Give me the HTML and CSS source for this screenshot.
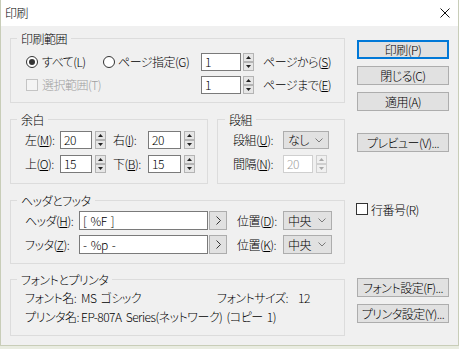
FILE: index.html
```html
<!DOCTYPE html>
<html lang="ja">
<head>
<meta charset="utf-8">
<title>印刷</title>
<link rel="stylesheet" href="styles.css">
</head>
<body>
<div class="window">
  <div class="titlebar">
    <span class="title">印刷</span>
    <svg class="close" width="10" height="10" viewBox="0 0 10 10"><path d="M0.5 0.5L9.5 9.5M9.5 0.5L0.5 9.5" stroke="#111" stroke-width="1"/></svg>
  </div>
  <div class="body">
    <div class="left">
      <div class="group g-range">
        <div class="legend">印刷範囲</div>
        <div class="row r-first">
          <label class="opt w-all"><span class="radio checked"></span>すべて(L)</label>
          <label class="opt w-pages"><span class="radio"></span>ページ指定(G)</label>
          <span class="input w40">1</span>
          <svg class="spin" width="11" height="18" viewBox="0 0 11 18"><rect x="0.5" y="0.5" width="10" height="8" fill="#e6e6e6" stroke="#b4b4b4"/><rect x="0.5" y="9.5" width="10" height="8" fill="#e6e6e6" stroke="#b4b4b4"/><path d="M3 6h5L5.5 3z" fill="#222"/><path d="M3 12h5L5.5 15z" fill="#222"/></svg>
          <span class="after">ページから(<u>S</u>)</span>
        </div>
        <div class="row r-second">
          <label class="opt w-sel disabled"><span class="check off"></span>選択範囲(T)</label>
          <span class="input w40">1</span>
          <svg class="spin" width="11" height="18" viewBox="0 0 11 18"><rect x="0.5" y="0.5" width="10" height="8" fill="#e6e6e6" stroke="#b4b4b4"/><rect x="0.5" y="9.5" width="10" height="8" fill="#e6e6e6" stroke="#b4b4b4"/><path d="M3 6h5L5.5 3z" fill="#222"/><path d="M3 12h5L5.5 15z" fill="#222"/></svg>
          <span class="after">ページまで(<u>E</u>)</span>
        </div>
      </div>

      <div class="pair">
        <div class="group g-margin">
          <div class="legend">余白</div>
          <div class="row m-first">
            <span class="lbl w35">左(<u>M</u>):</span>
            <span class="input w32">20</span>
            <svg class="spin" width="11" height="18" viewBox="0 0 11 18"><rect x="0.5" y="0.5" width="10" height="8" fill="#e6e6e6" stroke="#b4b4b4"/><rect x="0.5" y="9.5" width="10" height="8" fill="#e6e6e6" stroke="#b4b4b4"/><path d="M3 6h5L5.5 3z" fill="#222"/><path d="M3 12h5L5.5 15z" fill="#222"/></svg>
            <span class="lbl w35 gap7">右(<u>I</u>):</span>
            <span class="input w33">20</span>
            <svg class="spin" width="11" height="18" viewBox="0 0 11 18"><rect x="0.5" y="0.5" width="10" height="8" fill="#e6e6e6" stroke="#b4b4b4"/><rect x="0.5" y="9.5" width="10" height="8" fill="#e6e6e6" stroke="#b4b4b4"/><path d="M3 6h5L5.5 3z" fill="#222"/><path d="M3 12h5L5.5 15z" fill="#222"/></svg>
          </div>
          <div class="row m-second">
            <span class="lbl w35">上(<u>O</u>):</span>
            <span class="input w32">15</span>
            <svg class="spin" width="11" height="18" viewBox="0 0 11 18"><rect x="0.5" y="0.5" width="10" height="8" fill="#e6e6e6" stroke="#b4b4b4"/><rect x="0.5" y="9.5" width="10" height="8" fill="#e6e6e6" stroke="#b4b4b4"/><path d="M3 6h5L5.5 3z" fill="#222"/><path d="M3 12h5L5.5 15z" fill="#222"/></svg>
            <span class="lbl w35 gap7">下(<u>B</u>):</span>
            <span class="input w33">15</span>
            <svg class="spin" width="11" height="18" viewBox="0 0 11 18"><rect x="0.5" y="0.5" width="10" height="8" fill="#e6e6e6" stroke="#b4b4b4"/><rect x="0.5" y="9.5" width="10" height="8" fill="#e6e6e6" stroke="#b4b4b4"/><path d="M3 6h5L5.5 3z" fill="#222"/><path d="M3 12h5L5.5 15z" fill="#222"/></svg>
          </div>
        </div>
        <div class="group g-cols">
          <div class="legend">段組</div>
          <div class="row m-first">
            <span class="lbl w50">段組(<u>U</u>):</span>
            <span class="select w46"><span>なし</span><svg width="8" height="5" viewBox="0 0 8 5"><path d="M0.5 0.5L4 4L7.5 0.5" fill="none" stroke="#7a7a7a"/></svg></span>
          </div>
          <div class="row m-second">
            <span class="lbl w50">間隔(<u>N</u>):</span>
            <span class="input w30 dis">20</span>
            <svg class="spin" width="11" height="18" viewBox="0 0 11 18"><rect x="0.5" y="0.5" width="10" height="8" fill="#f0f0f0" stroke="#d0d0d0"/><rect x="0.5" y="9.5" width="10" height="8" fill="#f0f0f0" stroke="#d0d0d0"/><path d="M3 6h5L5.5 3z" fill="#a8a8a8"/><path d="M3 12h5L5.5 15z" fill="#a8a8a8"/></svg>
          </div>
        </div>
      </div>

      <div class="group g-header">
        <div class="legend">ヘッダとフッタ</div>
        <div class="row h-first">
          <span class="lbl w54">ヘッダ(<u>H</u>):</span>
          <span class="input w129">[ %F ]</span>
          <span class="arrowbtn"><svg width="5" height="9" viewBox="0 0 5 9"><path d="M0.5 0.5L4.5 4.5L0.5 8.5" fill="none" stroke="#333"/></svg></span>
          <span class="lbl w46 gap10">位置(<u>D</u>):</span>
          <span class="select w49"><span>中央</span><svg width="8" height="5" viewBox="0 0 8 5"><path d="M0.5 0.5L4 4L7.5 0.5" fill="none" stroke="#7a7a7a"/></svg></span>
        </div>
        <div class="row h-second">
          <span class="lbl w54">フッタ(<u>Z</u>):</span>
          <span class="input w129">- %p -</span>
          <span class="arrowbtn"><svg width="5" height="9" viewBox="0 0 5 9"><path d="M0.5 0.5L4.5 4.5L0.5 8.5" fill="none" stroke="#333"/></svg></span>
          <span class="lbl w46 gap10">位置(<u>K</u>):</span>
          <span class="select w49"><span>中央</span><svg width="8" height="5" viewBox="0 0 8 5"><path d="M0.5 0.5L4 4L7.5 0.5" fill="none" stroke="#7a7a7a"/></svg></span>
        </div>
      </div>

      <div class="group g-font">
        <div class="legend">フォントとプリンタ</div>
        <div class="row f-first">
          <span class="lbl w56">フォント名:</span>
          <span class="val w136">MS ゴシック</span>
          <span class="val w81">フォントサイズ:</span>
          <span class="val">12</span>
        </div>
        <div class="row f-second">
          <span class="lbl w56">プリンタ名:</span>
          <span class="val">EP-807A Series(ネットワーク) (コピー 1)</span>
        </div>
      </div>
    </div>

    <div class="right">
      <button class="btn default b-print">印刷(P)</button>
      <button class="btn b-next">閉じる(C)</button>
      <button class="btn b-next">適用(A)</button>
      <button class="btn b-preview">プレビュー(V)...</button>
      <label class="opt linenum"><span class="check"></span>行番号(R)</label>
      <button class="btn b-font">フォント設定(F)...</button>
      <button class="btn b-next">プリンタ設定(Y)...</button>
    </div>
  </div>
</div>
</body>
</html>
```

FILE: styles.css
```css
* { box-sizing: border-box; }
html, body { margin: 0; padding: 0; }
body {
  width: 459px;
  height: 349px;
  overflow: hidden;
  background: #e9ece1;
  font-family: "Noto Sans CJK JP", "Noto Sans", sans-serif;
  font-size: 12px;
  font-weight: 300;
  letter-spacing: -0.5px;
  word-spacing: 2px;
  color: #000;
  font-feature-settings: "palt";
}
.window {
  width: 459px;
  height: 346px;
  background: #f0f0f0;
  border: 1px solid #c8cdb8;
  border-top: none;
  display: flex;
  flex-direction: column;
}
.titlebar {
  flex: none;
  height: 26px;
  background: #fff;
  display: flex;
  align-items: center;
  justify-content: space-between;
  padding: 0 8px 0 4px;
}
.title { line-height: 14px; }
.close { display: block; }

.body { display: flex; gap: 12px; padding-left: 9px; }
.left { width: 335px; padding-top: 12px; display: flex; flex-direction: column; }
.right { width: 92px; display: flex; flex-direction: column; padding-top: 14px; }

/* group boxes */
.group { border: 1px solid #dcdcdc; display: flex; flex-direction: column; padding-left: 14px; }
.legend {
  align-self: flex-start;
  margin: -7px 0 0 -8px;
  padding: 0 4px;
  height: 14px;
  line-height: 14px;
  background: #f0f0f0;
}
.row { display: flex; align-items: center; height: 18px; line-height: 16px; white-space: nowrap; }

.g-range { height: 65px; }
.r-first { margin-top: 7px; padding-left: 1px; }
.r-second { margin-top: 5px; padding-left: 1px; }

.pair { display: flex; gap: 9px; margin-top: 16px; }
.g-margin { width: 198px; height: 65px; }
.g-cols { width: 128px; height: 65px; padding-left: 15px; }
.m-first { margin-top: 4px; }
.m-second { margin-top: 6px; }

.g-header { height: 64px; margin-top: 16px; }
.h-first { margin-top: 3px; height: 19px; }
.h-second { margin-top: 5px; height: 19px; }

.g-font { height: 57px; margin-top: 15px; }
.f-first { margin-top: 3px; height: 16px; }
.f-second { margin-top: 3px; height: 16px; }

/* controls */
.opt { display: flex; align-items: center; gap: 4px; white-space: nowrap; }
.w-all { width: 77px; }
.w-pages { width: 98px; gap: 3px; }
.w-sel { width: 175px; }
.disabled { color: #a0a0a0; }

.radio {
  width: 12px; height: 12px; border-radius: 50%;
  border: 1px solid #333; background: #fff;
  display: flex; align-items: center; justify-content: center;
  flex: none;
}
.radio.checked::after {
  content: ""; width: 6px; height: 6px; border-radius: 50%; background: #333;
}
.check { width: 12px; height: 12px; border: 1px solid #333; background: #fff; flex: none; }
.check.off { border-color: #c4c4c4; background: #f4f4f4; }

.input {
  height: 18px;
  border: 1px solid #7a7a7a;
  background: #fff;
  padding-left: 3px;
  line-height: 16px;
  flex: none;
}
.input.dis { border-color: #cfcfcf; color: #a0a0a0; }
.h-first .input, .h-second .input { height: 19px; line-height: 17px; }
.w40 { width: 40px; }
.w32 { width: 32px; }
.w33 { width: 33px; }
.w30 { width: 30px; }
.w129 { width: 129px; }

.spin { display: block; flex: none; margin-left: 2px; }
.m-first .spin, .m-second .spin { margin-left: 3px; }
.after { margin-left: 9px; }

.lbl { flex: none; }
.w35 { width: 35px; }
.w50 { width: 50px; }
.w54 { width: 54px; }
.w46 { width: 46px; }
.w56 { width: 56px; }
.gap7 { margin-left: 7px; }
.gap10 { margin-left: 10px; }

.select {
  height: 18px;
  background: #e1e1e1;
  border: 1px solid #adadad;
  display: flex; align-items: center; justify-content: space-between;
  padding: 0 5px 0 4px;
  flex: none;
}
.select svg { display: block; }
.w46.select { width: 46px; }
.w49 { width: 49px; }
.h-first .select, .h-second .select { height: 19px; }

.arrowbtn {
  width: 18px; height: 19px;
  margin-left: 1px;
  background: #e1e1e1;
  border: 1px solid #adadad;
  display: flex; align-items: center; justify-content: center;
  flex: none;
}
.arrowbtn svg { display: block; }

.val { flex: none; }
.w136 { width: 136px; }
.w81 { width: 81px; }

u { text-decoration-thickness: 1px; text-underline-offset: 1px; }

/* buttons */
.btn {
  font: inherit;
  letter-spacing: inherit;
  word-spacing: inherit;
  color: #000;
  width: 92px;
  height: 19px;
  padding: 0;
  line-height: 16px;
  white-space: nowrap;
  background: #e1e1e1;
  border: 1px solid #adadad;
  border-radius: 0;
}
.btn.default { border-color: #0078d7; box-shadow: inset 0 0 0 1px #0078d7; }
.b-next { margin-top: 7px; }
.b-preview { margin-top: 22px; }
.linenum { margin-top: 51px; margin-left: -1px; height: 12px; gap: 3px; }
.b-font { margin-top: 63px; }
```
